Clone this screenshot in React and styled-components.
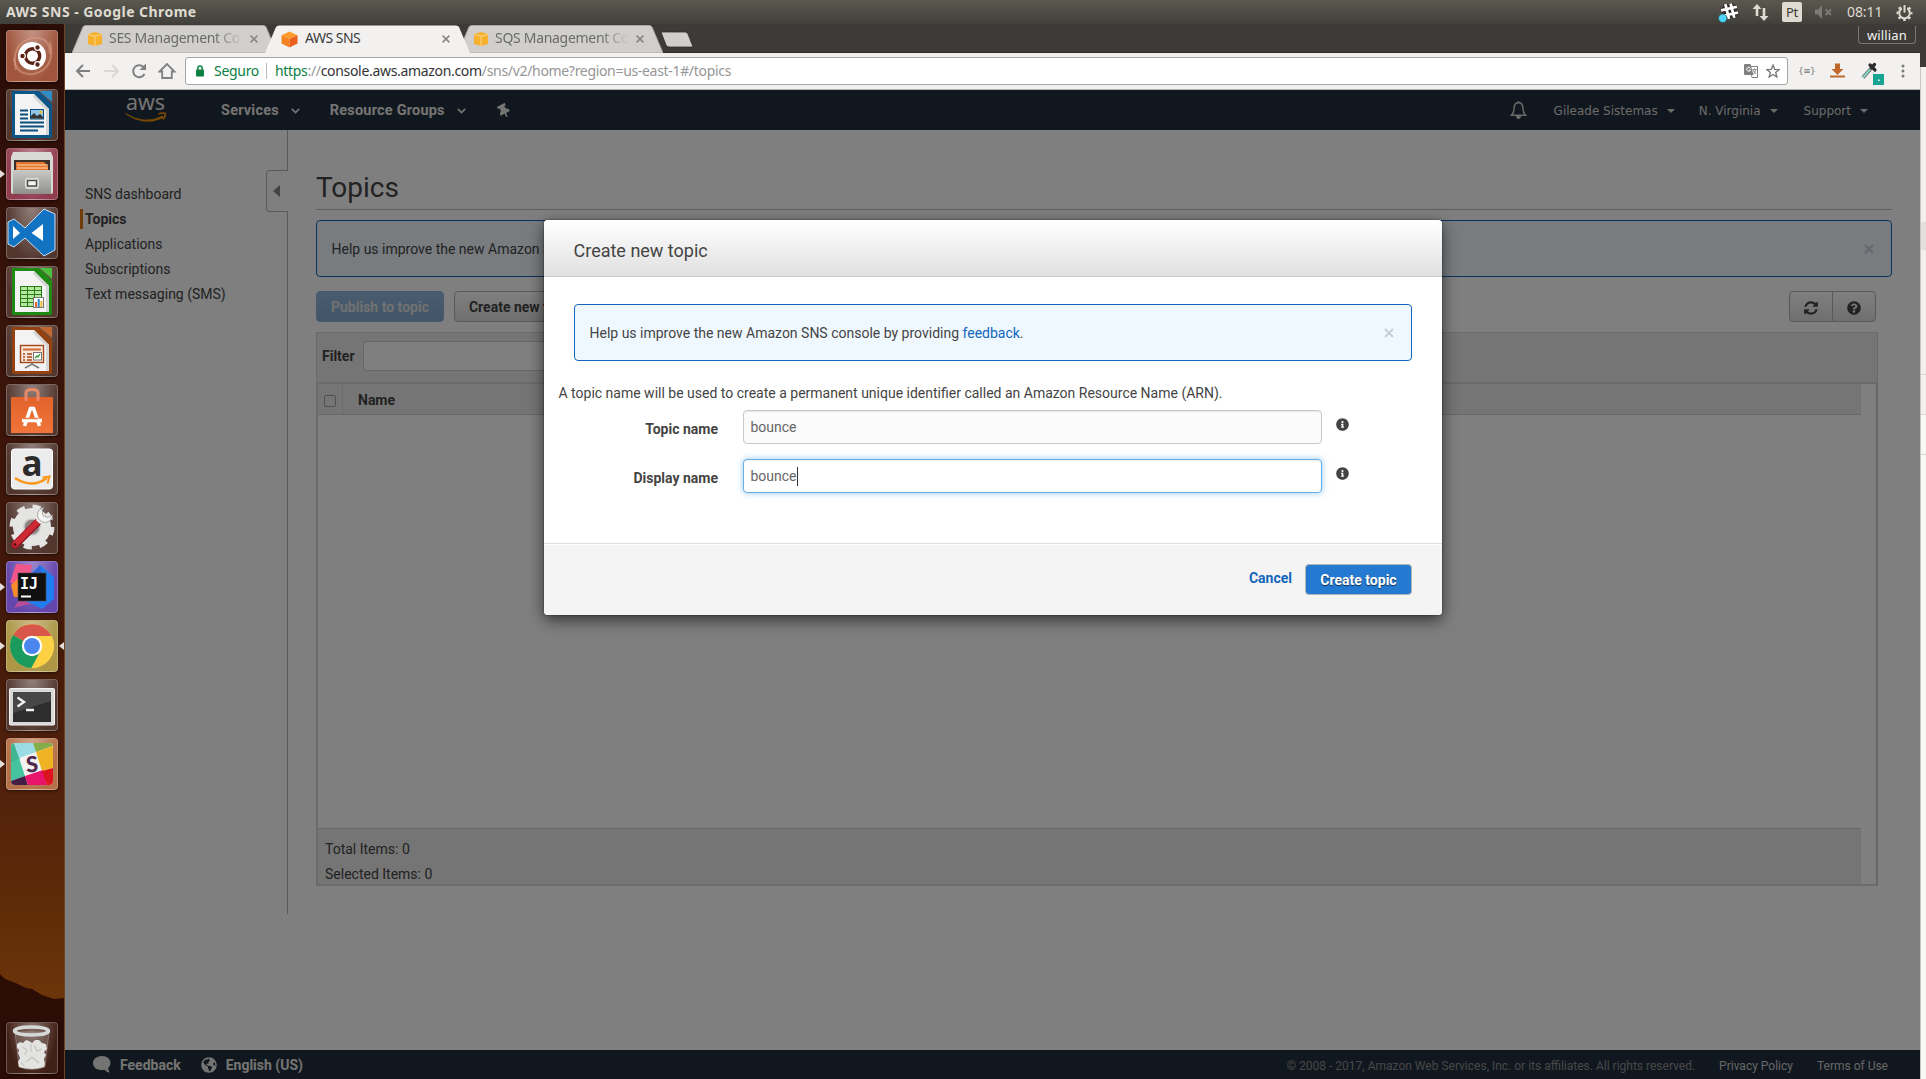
import React from "react";
import styled, { createGlobalStyle, css } from "styled-components";
import { FaInfoCircle, FaQuestionCircle, FaThumbtack, FaGlobeAmericas } from "react-icons/fa";

const ubuntu = `"Noto Sans", "Open Sans", sans-serif`;
const roboto = `Roboto, "Liberation Sans", sans-serif`;

const Global = createGlobalStyle`
  *, *::before, *::after { box-sizing: border-box; }
  html, body { margin: 0; padding: 0; }
  body { width: 1926px; height: 1079px; overflow: hidden; background: #000; font-family: ${roboto}; font-size: 14px; }
  svg { display: block; flex: none; }
`;

const Desktop = styled.div`
  width: 1926px;
  height: 1079px;
  display: grid;
  grid-template: 24px 1055px / 65px 1855px 6px;
  overflow: hidden;
`;

/* ---------- system panel ---------- */
const Panel = styled.header`
  grid-column: 1 / -1;
  display: flex;
  align-items: center;
  padding: 0 13px 0 6px;
  background: linear-gradient(#5b594f, #403f3a);
  color: #dfdbd2;
  font-family: ${ubuntu};
`;
const PanelTitle = styled.span`
  flex: 1;
  font-size: 14px;
  font-weight: 700;
  line-height: 24px;
  letter-spacing: ${(p) => p.$ls || "0px"};
  white-space: nowrap;
`;
const Indicators = styled.div`
  display: flex;
  align-items: center;
`;
const Indicator = styled.span`
  display: flex;
  margin-right: ${(p) => p.$gap}px;
`;
const LayoutBadge = styled.span`
  width: 20px;
  height: 20px;
  margin-right: 13px;
  border-radius: 2px;
  background: #dfdbd2;
  color: #3c3b37;
  font-size: 13px;
  line-height: 20px;
  text-align: center;
  letter-spacing: -0.2px;
`;
const Clock = styled.span`
  width: 36px;
  margin-right: 13px;
  font-size: 14px;
  line-height: 22px;
  letter-spacing: -0.1px;
  white-space: nowrap;
`;

/* ---------- launcher ---------- */
const Launcher = styled.nav`
  position: relative;
  display: flex;
  flex-direction: column;
  gap: 7px;
  padding: 6px 0 5px 6px;
  border-right: 1px solid #6d4326;
  background: linear-gradient(#2b0d07 0, #37130a 25%, #431909 55%, #51210c 72%, #5c2a08 82%, #6c3409 92%, #6c3409 100%);
`;
const Wallpaper = styled.svg`
  position: absolute;
  left: 0;
  bottom: 0;
`;
const Tile = styled.div`
  position: relative;
  width: 52px;
  height: 52px;
  flex: none;
  border-radius: 4px;
  border: 1px solid rgba(255, 255, 255, 0.24);
  background: radial-gradient(ellipse at 50% -10%, rgba(255, 255, 255, 0.42), rgba(255, 255, 255, 0.06) 75%), ${(p) => p.$bg || "#472a22"};
  box-shadow: 0 1px 3px rgba(0, 0, 0, 0.5);
  margin-top: ${(p) => (p.$last ? "auto" : 0)};
  & > svg { margin: -1px; }
`;
const Running = styled.i`
  position: absolute;
  left: -7px;
  top: 21px;
  border: 4px solid transparent;
  border-left: 5px solid #e3dedb;
  border-right: 0;
`;
const Focused = styled.i`
  position: absolute;
  right: -7px;
  top: 21px;
  border: 4px solid transparent;
  border-right: 5px solid #e3dedb;
  border-left: 0;
`;

/* ---------- browser ---------- */
const Browser = styled.main`
  display: grid;
  grid-template-rows: 29px 37px 960px 29px;
  min-width: 0;
  position: relative;
`;
const TabStrip = styled.div`
  display: flex;
  align-items: flex-end;
  padding-left: 7px;
  background: #3c3b37;
  border-bottom: 1px solid #2f2e2b;
`;
const Tab = styled.div`
  position: relative;
  display: flex;
  align-items: center;
  width: 205px;
  height: 28px;
  margin: 0 -12px -1px 0;
  padding-left: 16px;
  z-index: ${(p) => (p.$active ? 3 : 1)};
  color: ${(p) => (p.$active ? "#3c3c3c" : "#6b6b69")};
  font-family: ${ubuntu};
  font-size: 14px;
`;
const TabShape = styled.svg`
  position: absolute;
  inset: 0;
  z-index: -1;
`;
const TabTitle = styled.span`
  width: ${(p) => p.$w}px;
  margin-left: 7px;
  overflow: hidden;
  white-space: nowrap;
  line-height: 20px;
  padding-bottom: 2px;
  letter-spacing: ${(p) => p.$ls};
  ${(p) =>
    p.$fade &&
    css`
      mask-image: linear-gradient(90deg, #000 80%, transparent 101%);
    `}
`;
const TabClose = styled.svg`
  margin-left: ${(p) => p.$gap}px;
`;
const NewTab = styled.svg`
  margin: 0 0 4px 9px;
  align-self: flex-end;
`;
const UserBadge = styled.span`
  height: 18px;
  margin: 0 4px 8px auto;
  padding: 0 8px;
  border: 1px solid #7a7974;
  border-top: 0;
  border-radius: 0 0 4px 4px;
  color: #f2f1f0;
  font: 13px/19px ${ubuntu};
  letter-spacing: 0.15px;
`;
const Toolbar = styled.div`
  display: flex;
  align-items: center;
  padding-left: 9px;
  background: #f2f1f0;
  border-bottom: 1px solid #b6b4b2;
  font-family: ${ubuntu};
  font-size: 14px;
`;
const NavIcons = styled.div`
  display: flex;
  gap: 8px;
  width: 111px;
`;
const Omnibox = styled.div`
  display: flex;
  align-items: center;
  width: 1603px;
  height: 28px;
  padding: 0 7px 0 9px;
  border: 1px solid #a5a5a3;
  border-radius: 3px;
  background: #fff;
  white-space: nowrap;
  color: #969696;
  line-height: 24px;
`;
const Secure = styled.span`
  width: 53px;
  margin-left: 9px;
  padding-right: 7px;
  border-right: 1px solid #bbb;
  color: #0b8043;
  line-height: 16px;
  letter-spacing: ${(p) => p.$ls};
`;
const Url = styled.span`
  flex: 1;
  margin-left: 8px;
  letter-spacing: -0.32px;
  & em { font-style: normal; color: #0b8043; }
  & b { font-weight: 400; color: #333; }
`;
const BoxIcons = styled.div`
  display: flex;
  align-items: center;
  gap: 8px;
`;
const Extensions = styled.div`
  display: flex;
  align-items: center;
  flex: 1;
  padding-left: 10px;
`;
const ExtBraces = styled.span`
  width: 15px;
  color: #777;
  font: 9px/12px "DejaVu Sans", sans-serif;
  white-space: nowrap;
  letter-spacing: -0.6px;
`;

/* ---------- AWS page ---------- */
const Page = styled.section`
  display: grid;
  grid-template-rows: 40px 920px;
  background: #fff;
`;
const AwsHeader = styled.div`
  display: flex;
  align-items: center;
  padding: 0 52px 0 60px;
  background: #232f3e;
  color: #e8e8e6;
`;
const NavItem = styled.span`
  display: flex;
  align-items: center;
  gap: 12px;
  margin-left: ${(p) => p.$ml}px;
  padding-top: 2px;
  font-size: 14.5px;
  font-weight: 700;
  letter-spacing: 0.2px;
  line-height: 20px;
`;
const Pin = styled(FaThumbtack)`
  transform: rotate(-28deg);
`;
const Spacer = styled.span`
  flex: 1;
`;
const AccountItem = styled.span`
  display: flex;
  align-items: center;
  gap: 9px;
  margin-left: ${(p) => p.$ml}px;
  padding-top: 2px;
  color: #d6d6d4;
  font: 12px/20px "DejaVu Sans", Verdana, sans-serif;
`;
const Caret = styled.i`
  border: 4px solid transparent;
  border-top: 4px solid #d6d6d4;
  border-bottom: 0;
`;
const Columns = styled.div`
  display: grid;
  grid-template-columns: 223px 1fr;
`;
const Sidebar = styled.aside`
  position: relative;
  height: 784px;
  padding: 54px 0 0 15px;
  border-right: 1px solid #b4b4b4;
`;
const SideLink = styled.div`
  height: 20px;
  margin-bottom: 5px;
  padding-left: 2px;
  border-left: 3px solid ${(p) => (p.$active ? "#e47911" : "transparent")};
  font-weight: ${(p) => (p.$active ? 700 : 400)};
  color: #444;
  line-height: 20px;
`;
const Collapse = styled.div`
  position: absolute;
  right: -1px;
  top: 40px;
  display: flex;
  align-items: center;
  width: 22px;
  height: 42px;
  padding-left: 6px;
  border: 1px solid #b4b4b4;
  border-right: 0;
  border-radius: 4px 0 0 4px;
  background: #fff;
`;
const Content = styled.div`
  padding: 0 28px 0 28px;
`;
const Heading = styled.h1`
  height: 80px;
  margin: 0 0 10px;
  padding-top: 39px;
  border-bottom: 1px solid #bbb;
  color: #444;
  font-size: 28px;
  font-weight: 400;
  line-height: 38px;
`;
const Alert = styled.div`
  display: flex;
  align-items: center;
  justify-content: space-between;
  height: 57px;
  padding: 0 17px 0 14.5px;
  border: 1px solid #1166bb;
  border-radius: 4px;
  background: #f0f8ff;
  color: #444;
  line-height: 20px;
  & a { color: #1166bb; }
`;
const Actions = styled.div`
  display: flex;
  width: 1560px;
  height: 31px;
  margin: 14px 0 10px;
`;
const Button = styled.button`
  height: 31px;
  padding: 0 14px;
  border-radius: 4px;
  font: 700 14px/20px ${roboto};
  white-space: nowrap;
  ${(p) =>
    p.$primary
      ? css`
          color: #fff;
          border: 1px solid #b5b5b5;
          background: #2479d0;
          text-shadow: 0 1px 1px rgba(0, 0, 0, 0.6);
        `
      : css`
          color: #444;
          border: 1px solid #b2b2b2;
          background: linear-gradient(#fff, #dfdfdf);
        `}
  ${(p) =>
    p.$disabled &&
    css`
      color: #e2e2e2;
      border-color: #8fb3d8;
      background: linear-gradient(#92b9e0, #85aad0);
      text-shadow: none;
    `}
  & + & { margin-left: 10px; }
`;
const ButtonGroup = styled.div`
  display: flex;
  margin-left: auto;
  border: 1px solid #b2b2b2;
  border-radius: 4px;
  background: linear-gradient(#fff, #dfdfdf);
  color: #444;
`;
const GroupButton = styled.span`
  display: flex;
  align-items: center;
  justify-content: center;
  width: 42px;
  padding-top: 3px;
  & + & { width: 43px; border-left: 1px solid #b2b2b2; }
`;
const Table = styled.div`
  width: 1562px;
  height: 554px;
  display: grid;
  grid-template-rows: 50px 1fr;
`;
const FilterBar = styled.div`
  display: flex;
  align-items: flex-start;
  padding: 8px 6px 0 5px;
  border: 1px solid #d6d6d6;
  border-bottom: 0;
  background: #ebebeb;
  color: #444;
  font-weight: 700;
  line-height: 30px;
`;
const FilterInput = styled.div`
  width: 300px;
  height: 30px;
  margin-left: 8px;
  border: 1px solid #ccc;
  border-radius: 4px;
  background: #fff;
`;
const Grid = styled.div`
  display: grid;
  grid-template-rows: 31px 1fr 56px;
  padding-right: 15px;
  border: 2px solid #d6d6d6;
  border-right-color: #cfcfcf;
`;
const GridHead = styled.div`
  display: flex;
  align-items: flex-start;
  border-bottom: 1px solid #cfcfcf;
  background: #ebebeb;
  color: #444;
  font-weight: 700;
  line-height: 32px;
`;
const CheckCell = styled.span`
  width: 25px;
  height: 100%;
  padding: 11px 0 0 6px;
  margin-right: 15px;
  border-right: 1px solid #d6d6d6;
`;
const Checkbox = styled.i`
  display: block;
  width: 12px;
  height: 12px;
  border: 1px solid #a0a0a0;
  border-radius: 2px;
`;
const GridFoot = styled.div`
  padding: 8px 7px 0;
  border-top: 1px solid #cfcfcf;
  background: #ebebeb;
  color: #444;
  line-height: 25px;
`;
const Footer = styled.footer`
  display: flex;
  align-items: center;
  padding: 0 32px 0 28px;
  background: #232f3e;
  color: #e8e8e6;
`;
const FooterLink = styled.span`
  margin: 0 ${(p) => p.$mr || 0}px 0 9px;
  font-weight: 700;
`;
const Legal = styled.span`
  margin-left: ${(p) => p.$ml || 0}px;
  padding-top: 3px;
  font-size: 12px;
  color: ${(p) => (p.$dim ? "#8f9190" : "#cccccc")};
  white-space: nowrap;
`;

/* ---------- modal ---------- */
const Overlay = styled.div`
  position: absolute;
  left: 0;
  right: 0;
  top: 66px;
  bottom: 0;
  z-index: 10;
  display: flex;
  align-items: flex-start;
  justify-content: flex-start;
  padding: 130px 0 0 479px;
  background: rgba(0, 0, 0, 0.5);
`;
const Modal = styled.div`
  width: 898px;
  height: 395px;
  display: grid;
  grid-template-rows: 57px 266px 72px;
  border-radius: 4px;
  background: #fff;
  overflow: hidden;
  color: #444;
`;
const ModalShadow = styled.div`
  border-radius: 4px;
  box-shadow: 0 0 2px rgba(0, 0, 0, 0.6), 0 5px 16px rgba(0, 0, 0, 0.6);
`;
const ModalTitle = styled.div`
  padding-left: 29.5px;
  border-bottom: 1px solid #ccc;
  background: linear-gradient(#fff, #e0e0e0);
  font-size: 18px;
  line-height: 61px;
`;
const ModalBody = styled.div`
  padding: 27px 15px 0;
  & > ${Alert} { margin: 0 15px; }
`;
const Intro = styled.p`
  margin: 22px 0 7px -0.5px;
  line-height: 20px;
`;
const Field = styled.div`
  display: flex;
  align-items: flex-start;
  height: 34px;
  margin-bottom: 15px;
`;
const Label = styled.span`
  width: 159px;
  margin-right: 25px;
  padding-top: 2px;
  text-align: right;
  font-weight: 700;
  line-height: 34px;
`;
const Input = styled.div`
  display: flex;
  align-items: center;
  width: 579px;
  height: 34px;
  margin-right: 14px;
  padding-left: 6.5px;
  border: 1px solid #c8c8c8;
  border-radius: 4px;
  background: #fbfbfb;
  box-shadow: inset 0 1px 1px rgba(0, 0, 0, 0.08);
  color: #666;
  line-height: 20px;
  ${(p) =>
    p.$focus &&
    css`
      border-color: #66afe9;
      background: #fff;
      box-shadow: inset 0 1px 1px rgba(0, 0, 0, 0.06), 0 0 6px rgba(102, 175, 233, 0.7);
    `}
`;
const Cursor = styled.i`
  width: 1px;
  height: 19px;
  background: #333;
`;
const InfoIcon = styled(FaInfoCircle)`
  margin-top: 8px;
`;
const ModalFooter = styled.div`
  display: flex;
  align-items: flex-start;
  justify-content: flex-end;
  gap: 13px;
  padding: 19px 30px 0;
  border-top: 1px solid #ddd;
  box-shadow: inset 0 1px 0 #fff;
  background: #f4f4f4;
  & > ${Button} { width: 107px; margin-top: 1px; }
`;
const Cancel = styled.a`
  color: #1166bb;
  font-weight: 700;
  line-height: 30px;
`;

/* ---------- window behind ---------- */
const Behind = styled.div`
  display: grid;
  grid-template-rows: 43px 155px 28px 125px 40px 40px 1fr;
  border-left: 1px solid #c8c6c4;
  background: #f2f1f0;
`;
const Strip = styled.i`
  background: ${(p) => p.$bg};
  border-bottom: 1px solid ${(p) => p.$line || "transparent"};
  margin-left: ${(p) => p.$bleed || 0}px;
`;

const CloseX = () => (
  <svg width="10" height="10" viewBox="0 0 10 10">
    <path d="M1 1L9 9M9 1L1 9" stroke="#c4ced6" strokeWidth="1.900" />
  </svg>
);
const Chevron = () => (
  <svg width="9" height="6" viewBox="0 0 9 6">
    <path d="M.8 .8L4.500 4.600L8.200 .8" fill="none" stroke="#e8e8e6" strokeWidth="1.700" />
  </svg>
);
const Cube = ({ orange }) =>
  orange ? (
    <svg width="17" height="17" viewBox="0 0 17 17">
      <path d="M8.500 .5L16.500 4.200L8.500 8L.5 4.200Z" fill="#ff9a2e" />
      <path d="M.5 4.200L8.500 8V16.500L.5 12.500Z" fill="#f58220" />
      <path d="M16.500 4.200L8.500 8V16.500L16.500 12.500Z" fill="#ea5f1c" />
    </svg>
  ) : (
    <svg width="14" height="14" viewBox="0 0 14 14">
      <path d="M7 0L14 2V12L7 14L0 12V2Z" fill="#f6b22f" />
      <path d="M0 2.500L7 4.300L14 2.500M7 4.500V14" fill="none" stroke="#fbd893" strokeWidth=".9" />
    </svg>
  );

const BrowserTab = ({ title, active, w, ls, gap = 9 }) => (
  <Tab $active={active}>
    <TabShape width="205" height="28" viewBox="0 0 205 28">
      <path
        d="M0 28L11 2Q12 .5 14 .5H191Q193 .5 194 2L205 28Z"
        fill={active ? "#f2f1f0" : "#d0cfcd"}
        stroke={active ? "none" : "#a9a8a5"}
      />
    </TabShape>
    <Cube orange={active} />
    <TabTitle $w={w} $ls={ls} $fade={!active}>{title}</TabTitle>
    <TabClose $gap={gap} width="8" height="8" viewBox="0 0 8 8">
      <path d="M.6 .6L7.400 7.400M7.400 .6L.6 7.400" stroke="#858583" strokeWidth="1.500" />
    </TabClose>
  </Tab>
);

const FeedbackAlert = () => (
  <Alert>
    <span>Help us improve the new Amazon SNS console by providing <a>feedback</a>.</span>
    <CloseX />
  </Alert>
);

const DocIcon = ({ dark, light, children }) => (
  <svg width="52" height="52" viewBox="0 0 52 52">
    <path d="M6 2H33L46 15V47Q46 49 44 49H8Q6 49 6 47Z" fill={dark} />
    <path d="M34 2H46V13Z" fill={light} />
    <path d="M9 5H28L43 20V46H9Z" fill="#f3f3f3" />
    <path d="M28 5L43 20V46H40V21L27 8Z" fill="#d4d6d6" />
    {children}
  </svg>
);

const UbuntuIcon = () => (
  <svg width="52" height="52" viewBox="0 0 52 52">
    <path d="M10 40Q4 14 26 8Q44 6 44 24" fill="none" stroke="#d79a82" strokeWidth="2" opacity=".6" />
    <path d="M44 12Q50 38 28 44Q10 46 8 28" fill="none" stroke="#d79a82" strokeWidth="2" opacity=".6" />
    <circle cx="26" cy="26" r="14" fill="#fff" />
    <circle cx="26.500" cy="26" r="7.200" fill="none" stroke="#5b2416" strokeWidth="3.400" />
    <g fill="#5b2416" stroke="#fff" strokeWidth="1.200">
      <circle cx="16.500" cy="26" r="2.800" />
      <circle cx="31.500" cy="17.500" r="2.800" />
      <circle cx="31.500" cy="34.500" r="2.800" />
    </g>
  </svg>
);
const FilesIcon = () => (
  <svg width="52" height="52" viewBox="0 0 52 52">
    <defs>
      <linearGradient id="cab" x1="0" y1="0" x2="0" y2="1">
        <stop offset="0" stopColor="#c9c9c6" />
        <stop offset="1" stopColor="#8f8f8c" />
      </linearGradient>
    </defs>
    <path d="M7 4H45L47 9V44Q47 46 45 46H7Q5 46 5 44V9Z" fill="#d8d8d5" />
    <path d="M8 12H44V24H8Z" fill="#3a2f29" />
    <path d="M10 14H38L42 18V24H10Z" fill="#e2762f" />
    <path d="M11 17H42M11 20H42" stroke="#ffdca8" strokeWidth="1.200" />
    <path d="M7 22H45V46H7Z" fill="url(#cab)" />
    <rect x="19" y="30" width="14" height="11" rx="3" fill="#dededc" />
    <rect x="21.500" y="32.500" width="9" height="5.500" fill="#f4f4f4" stroke="#4b4b4b" strokeWidth="1.500" />
  </svg>
);
const CodeIcon = () => (
  <svg width="52" height="52" viewBox="0 0 52 52">
    <path d="M38 2L49 7V43L38 49L19 31L8 40L2 37V15L8 12L19 21Z" fill="#1173c2" stroke="#cfe0f0" strokeWidth="1" />
    <path d="M7 19V32L14 26Z" fill="#fff" />
    <path d="M37 17V34L25.500 26Z" fill="#fff" />
  </svg>
);
const BagIcon = () => (
  <svg width="52" height="52" viewBox="0 0 52 52">
    <defs>
      <linearGradient id="bag" x1="0" y1="0" x2="0" y2="1">
        <stop offset="0" stopColor="#e2622b" />
        <stop offset="1" stopColor="#f0753a" />
      </linearGradient>
    </defs>
    <path d="M5 13H47V49H5Z" fill="url(#bag)" />
    <path d="M20 17V9Q20 5.500 26 5.500Q32 5.500 32 9V17" fill="none" stroke="#e98a66" strokeWidth="3" />
    <path d="M18.500 42L24.500 24.500H27.500L33.500 42M16 36.500H36" fill="none" stroke="#fff" strokeWidth="3.600" />
    <path d="M17 34.500H32" stroke="#ef7a42" strokeWidth="1.500" />
  </svg>
);
const AmazonIcon = () => (
  <svg width="52" height="52" viewBox="0 0 52 52">
    <rect x="5.500" y="6" width="41" height="40" rx="3" fill="#ececec" stroke="#fff" />
    <text x="26" y="33" textAnchor="middle" fontFamily="Open Sans, sans-serif" fontWeight="700" fontSize="35" fill="#2b2b2b">a</text>
    <path d="M9 35Q26 46 41 35" fill="none" stroke="#f7981d" strokeWidth="2.600" />
    <path d="M36.500 34.500L43.500 33.500L41.500 40.500" fill="none" stroke="#f7981d" strokeWidth="2" />
  </svg>
);
const SettingsIcon = () => (
  <svg width="52" height="52" viewBox="0 0 52 52">
    <circle cx="26" cy="25" r="20" fill="none" stroke="#e4e4e2" strokeWidth="5" strokeDasharray="8 7.700" />
    <circle cx="26" cy="25" r="13.500" fill="none" stroke="#e4e4e2" strokeWidth="11" />
    <circle cx="26" cy="25" r="8" fill="#8d8280" stroke="#c6c6c4" strokeWidth="1.500" />
    <path d="M9 43L31 21" stroke="#8d1720" strokeWidth="7.600" strokeLinecap="round" />
    <path d="M9 42.500L31 20.500" stroke="#cf2a33" strokeWidth="5.600" strokeLinecap="round" />
    <path d="M32 20L37 15" stroke="#ededed" strokeWidth="6" />
    <path d="M38 5.500A7.500 7.500 0 1 0 46.500 13L42 15.500L37 13.500L36 8.500Z" fill="#f3f3f3" stroke="#8e8e8e" strokeWidth=".7" />
    <circle cx="9" cy="42.500" r="1.500" fill="#5b0c12" />
  </svg>
);
const IdeaIcon = () => (
  <svg width="52" height="52" viewBox="0 0 52 52">
    <path d="M10 3L26 4L22 24L4 22Z" fill="#f0568a" />
    <path d="M5 24L18 12V36H8Z" fill="#f68b2c" />
    <path d="M8 47L20 28L34 40Z" fill="#b74c9a" />
    <path d="M34 4L48 16V38L36 48L20 40L26 12Z" fill="#1f7df0" />
    <path d="M26 14L34 4L38 22Z" fill="#3563d8" />
    <rect x="12" y="12" width="28" height="28" fill="#101010" stroke="#4b4b4b" strokeWidth=".6" />
    <text x="14" y="28" fontFamily="DejaVu Sans Mono, monospace" fontWeight="700" fontSize="15" fill="#fff">IJ</text>
    <path d="M15 35.500H25" stroke="#fff" strokeWidth="2" />
  </svg>
);
const ChromeIcon = () => (
  <svg width="52" height="52" viewBox="0 0 52 52">
    <circle cx="26" cy="26" r="22" fill="#fdd144" />
    <path d="M26 26L7 15A22 22 0 0 1 45.500 16H26Z" fill="#d8564a" />
    <path d="M7 15A22 22 0 0 0 25.500 48L35 31L26 26Z" fill="#1a9a5c" />
    <path d="M26 16H45.500A22 22 0 0 1 25.500 48L35 30Z" fill="#fdd144" />
    <circle cx="26" cy="26" r="10.200" fill="#fff" />
    <circle cx="26" cy="26" r="8" fill="#4a86ee" />
  </svg>
);
const TerminalIcon = () => (
  <svg width="52" height="52" viewBox="0 0 52 52">
    <rect x="3.500" y="9.500" width="45" height="36.500" rx="1" fill="#d9d9d7" stroke="#f3f3f3" />
    <rect x="7" y="13" width="38" height="30" fill="#2d2d2d" />
    <path d="M7 13H45V22L7 34Z" fill="#474747" />
    <path d="M11.500 18.500L18 23L11.500 27.500M20 31H28" fill="none" stroke="#f2f2f2" strokeWidth="2.400" />
  </svg>
);
const SlackIcon = () => (
  <svg width="52" height="52" viewBox="0 0 52 52">
    <defs><clipPath id="sl"><rect x="5" y="5" width="42" height="42" rx="4" /></clipPath></defs>
    <g clipPath="url(#sl)">
      <rect x="5" y="5" width="42" height="42" fill="#f4f2f0" />
      <path d="M5 5H8L14 21L5 25Z" fill="#3fb590" />
      <path d="M8 5H27L30 14L13 20Z" fill="#9adbe4" />
      <path d="M27 5H47V8L30 14Z" fill="#84ae4a" />
      <path d="M30 14L47 8V30L36 33Z" fill="#efb323" />
      <path d="M5 25L13 20L19 38L5 43Z" fill="#45c3a0" />
      <path d="M5 43L19 38L22 47H5Z" fill="#441f45" />
      <path d="M19 38L37 32L41 47H22Z" fill="#e8146c" />
      <path d="M36 33L47 30V47H41Z" fill="#dc1420" />
    </g>
    <text x="26" y="34" textAnchor="middle" fontFamily="Lato, sans-serif" fontWeight="900" fontSize="22" fill="#50294f" transform="rotate(-4 26 26)">S</text>
  </svg>
);
const TrashIcon = () => (
  <svg width="52" height="52" viewBox="0 0 52 52">
    <path d="M9 10L13 45Q26 50 39 45L43 10Z" fill="rgba(255,255,255,.12)" stroke="rgba(255,255,255,.25)" />
    <path d="M11 22L14 20L17 21L20 18L23 19L26 21L29 18L33 18L36 21L40 22L41 27L38 30L40 33L38 37L39 42L38 45Q26 49 13 45L12 40L14 36L12 31L13 28L11 26Z" fill="#e3e3e1" />
    <path d="M16 25L21 28L19 33M28 23L31 29L36 27M20 40L26 35L33 41M15 40L18 44M25 22L25 30" fill="none" stroke="#c4c4c1" strokeWidth="1.200" />
    <ellipse cx="25.500" cy="9" rx="17" ry="4" fill="none" stroke="#d5dad8" strokeWidth="3.400" />
  </svg>
);

const apps = [
  { id: "dash", bg: "#9a4a30", icon: <UbuntuIcon /> },
  {
    id: "writer",
    icon: (
      <DocIcon dark="#0b5688" light="#2e8cc7">
        <path d="M14 21.500H22M14 25.500H22M14 29.500H22M14 33.500H38M14 37.500H38M14 41.500H32" stroke="#0d4e80" strokeWidth="2" />
        <rect x="24.500" y="20.500" width="13" height="9.500" fill="#8ec4e8" stroke="#0d4e80" />
        <path d="M25 29.500V27L28 24L31 27L34 25L37 28V29.500Z" fill="#333" />
        <circle cx="35" cy="23" r="1.600" fill="#eec330" />
      </DocIcon>
    ),
  },
  { id: "files", bg: "#8a3145", running: true, icon: <FilesIcon /> },
  { id: "code", icon: <CodeIcon /> },
  {
    id: "calc",
    icon: (
      <DocIcon dark="#1d8a12" light="#4cc03c">
        <rect x="14.500" y="20.500" width="21" height="20" fill="#b5e6a4" stroke="#26800f" />
        <path d="M14 24.500H36M14 28.500H36M14 32.500H36M14 36.500H36M21.500 20V41M28.500 20V41" stroke="#26800f" />
        <rect x="27.500" y="31.500" width="10" height="10" fill="#fff" stroke="#777" />
        <path d="M30 41V36" stroke="#e8682a" strokeWidth="2" />
        <path d="M32.700 41V33" stroke="#2a7fc0" strokeWidth="2" />
        <path d="M35.400 41V35" stroke="#edb72e" strokeWidth="2" />
      </DocIcon>
    ),
  },
  {
    id: "impress",
    icon: (
      <DocIcon dark="#93420f" light="#c4672f">
        <rect x="14.500" y="20.500" width="23" height="17" fill="#fbe9dc" stroke="#a4461a" strokeWidth="1.400" />
        <path d="M17 24.500H35" stroke="#cf6a35" strokeWidth="2" />
        <path d="M17 29H19M17 32H19M17 35H19M21 29H26M21 32H26M21 35H26" stroke="#a4461a" strokeWidth="1.600" />
        <rect x="27.500" y="27.500" width="8" height="7.500" fill="#fff" stroke="#777" />
        <path d="M29 33L31 31L32 32L34 29" fill="none" stroke="#2f9a31" strokeWidth="1.300" />
        <path d="M26 38V40M19 43L26 39L33 43" fill="none" stroke="#777" strokeWidth="1.500" />
      </DocIcon>
    ),
  },
  { id: "software", icon: <BagIcon /> },
  { id: "amazon", icon: <AmazonIcon /> },
  { id: "settings", icon: <SettingsIcon /> },
  { id: "idea", bg: "#5a3aa8", running: true, icon: <IdeaIcon /> },
  { id: "chrome", bg: "#a8903c", running: true, focused: true, icon: <ChromeIcon /> },
  { id: "terminal", icon: <TerminalIcon /> },
  { id: "slack", bg: "#b0683e", running: true, icon: <SlackIcon /> },
];

const sideLinks = ["SNS dashboard", "Topics", "Applications", "Subscriptions", "Text messaging (SMS)"];

export default function App() {
  return (
    <Desktop>
      <Global />
      <Panel>
        <PanelTitle $ls="0.46px">AWS SNS - Google Chrome</PanelTitle>
        <Indicators>
          <Indicator $gap={13}>
            <svg width="21" height="21" viewBox="0 0 20 20">
              <path d="M7 2L10.500 16M12 1.500L15.500 15M3 8L18 4.500M4 13.500L19 10" stroke="#111" strokeWidth="5" opacity=".55" />
              <path d="M7 2L10.500 16M12 1.500L15.500 15M3 8L18 4.500M4 13.500L19 10" stroke="#fff" strokeWidth="2.600" />
              <circle cx="4.500" cy="15.500" r="4" fill="#4fd6fa" stroke="#2e5a66" strokeWidth=".8" />
            </svg>
          </Indicator>
          <Indicator $gap={13}>
            <svg width="17" height="17" viewBox="0 0 17 17">
              <path d="M5 0L9.500 5H6.300V12H3.700V5H.5ZM12 17L7.500 12H10.700V4H13.300V12H16.500Z" fill="#dfdbd2" />
            </svg>
          </Indicator>
          <LayoutBadge>Pt</LayoutBadge>
          <Indicator $gap={15}>
            <svg width="17" height="14" viewBox="0 0 17 14">
              <path d="M0 4.500H3L7 0V14L3 9.500H0Z" fill="#7c7a72" />
              <path d="M10.500 4.500L16 10M16 4.500L10.500 10" stroke="#7c7a72" strokeWidth="1.800" />
            </svg>
          </Indicator>
          <Clock>08:11</Clock>
          <svg width="17" height="17" viewBox="0 0 17 17">
            <circle cx="8.500" cy="9" r="7" fill="none" stroke="#dfdbd2" strokeWidth="2" strokeDasharray="2.600 2.898" strokeDashoffset="1.300" />
            <circle cx="8.500" cy="9" r="5.300" fill="none" stroke="#dfdbd2" strokeWidth="2" />
            <path d="M8.500 0V6" stroke="#4c4b45" strokeWidth="5" />
            <path d="M8.500 1V8.500" stroke="#dfdbd2" strokeWidth="2" />
          </svg>
        </Indicators>
      </Panel>

      <Launcher>
        <Wallpaper width="64" height="105" viewBox="0 0 64 105">
          <path d="M0 0L5 5L18 10L26 14L32 15L42 21L54 25L64 24V105H0Z" fill="#2c0d06" />
        </Wallpaper>
        {apps.map((a) => (
          <Tile key={a.id} $bg={a.bg}>
            {a.icon}
            {a.running && <Running />}
            {a.focused && <Focused />}
          </Tile>
        ))}
        <Tile $last $bg="#351208">
          <TrashIcon />
        </Tile>
      </Launcher>

      <Browser>
        <TabStrip>
          <BrowserTab title="SES Management Console" w={132} ls="-0.3px" />
          <BrowserTab active title="AWS SNS" w={130} ls="-0.5px" gap={7} />
          <BrowserTab title="SQS Management Console" w={132} ls="-0.3px" />
          <NewTab width="34" height="17" viewBox="0 0 34 17">
            <path d="M1 1H25Q27 1 28 3L33 16H9Q7 16 6 14Z" fill="#d0cfcd" stroke="#2f2e2b" strokeWidth=".8" />
          </NewTab>
          <UserBadge>willian</UserBadge>
        </TabStrip>

        <Toolbar>
          <NavIcons>
            <svg width="20" height="18" viewBox="0 0 20 18">
              <path d="M16 9H3M9 3L3 9L9 15" fill="none" stroke="#808080" strokeWidth="2" />
            </svg>
            <svg width="20" height="18" viewBox="0 0 20 18">
              <path d="M2 9H16M10 3L16 9L10 15" fill="none" stroke="#d8d7d5" strokeWidth="2" />
            </svg>
            <svg width="20" height="18" viewBox="0 0 20 18">
              <path d="M14.500 12A6 6 0 1 1 14 5.500" fill="none" stroke="#808080" strokeWidth="2" />
              <path d="M16 1.500V8H9.500Z" fill="#808080" />
            </svg>
            <svg width="20" height="18" viewBox="0 0 20 18">
              <path d="M9 2L1.500 9.500H4.200V16H13.800V9.500H16.500Z" fill="none" stroke="#808080" strokeWidth="1.800" />
            </svg>
          </NavIcons>
          <Omnibox>
            <svg width="10" height="12" viewBox="0 0 10 12">
              <path d="M2.800 5V3.200A2.200 2.200 0 0 1 7.200 3.200V5" fill="none" stroke="#0b8043" strokeWidth="1.500" />
              <rect x="1" y="4.500" width="8" height="7" rx=".8" fill="#0b8043" />
            </svg>
            <Secure $ls="-0.3px">Seguro</Secure>
            <Url>
              <em>https</em>://<b>console.aws.amazon.com</b>/sns/v2/home?region=us-east-1#/topics
            </Url>
            <BoxIcons>
              <svg width="14" height="14" viewBox="0 0 14 14">
                <path d="M1 0H6.500L9.500 11H1Q0 11 0 10V1Q0 0 1 0Z" fill="#808080" />
                <path d="M6.500 2.500H13.500V13.500H8L7.500 11" fill="none" stroke="#808080" />
                <path d="M6.500 4.300A2 2 0 1 0 6.600 6H4.800" fill="none" stroke="#fff" />
                <path d="M8.500 5.500H12.500M10.500 4.500V5.500M9 6L12 10M12 6L9.500 10" stroke="#808080" strokeWidth=".9" />
              </svg>
              <svg width="14" height="14" viewBox="0 0 14 14">
                <path d="M7 1L8.700 5.300L13.200 5.600L9.700 8.500L10.900 13L7 10.500L3.100 13L4.300 8.500L.8 5.600L5.300 5.300Z" fill="none" stroke="#767676" strokeWidth="1.300" />
              </svg>
            </BoxIcons>
          </Omnibox>
          <Extensions>
            <ExtBraces>{"{≡}"}</ExtBraces>
            <svg width="73" height="28" viewBox="0 0 73 28">
              <path d="M22 6.500H27V12H30.500L24.500 18L18.500 12H22Z" fill="#c0692a" />
              <path d="M17 19.500H32" stroke="#c0692a" strokeWidth="2" />
              <path d="M50 20.500L58 11.500" stroke="#777" strokeWidth="3.600" />
              <path d="M50 20.500L57 12.500" stroke="#7fe6cf" strokeWidth="1.800" />
              <path d="M57 8L62 13M58.500 10.500L61.500 7.500" stroke="#2b2b2b" strokeWidth="3.200" strokeLinecap="round" />
              <rect x="60" y="17" width="11" height="11" fill="#17a493" />
              <rect x="65" y="22.500" width="1.500" height="1.500" fill="#fff" />
            </svg>
            <svg width="20" height="16" viewBox="0 0 20 16">
              <circle cx="17" cy="3" r="1.500" fill="#7a7a7a" />
              <circle cx="17" cy="8" r="1.500" fill="#7a7a7a" />
              <circle cx="17" cy="13" r="1.500" fill="#7a7a7a" />
            </svg>
          </Extensions>
        </Toolbar>

        <Page>
          <AwsHeader>
            <svg width="42" height="30" viewBox="0 0 42 30">
              <text x="20.500" y="15" textAnchor="middle" fontFamily="Noto Sans, sans-serif" fontSize="21" fill="#e8e8e6" textLength="39" lengthAdjust="spacingAndGlyphs">aws</text>
              <path d="M.5 18.500Q19 30.500 38 21L37.500 23Q18 31.500 .5 18.500Z" fill="#f90" stroke="#f90" strokeWidth=".8" />
              <path d="M33.500 19Q38 17.300 40.500 18.500Q40.500 21.500 38 24.500" fill="none" stroke="#f90" strokeWidth="1.500" />
            </svg>
            <NavItem $ml={54}>Services <Chevron /></NavItem>
            <NavItem $ml={30}>Resource Groups <Chevron /></NavItem>
            <NavItem $ml={31}><Pin size={14} /></NavItem>
            <Spacer />
            <svg width="17" height="18" viewBox="0 0 17 18">
              <path d="M8.500 1.500C5 1.800 4 4.500 4 8Q4 11.500 1.500 14.200H15.500Q13 11.500 13 8C13 4.500 12 1.800 8.500 1.500Z" fill="none" stroke="#d6d6d4" strokeWidth="1.400" />
              <path d="M6.500 15.500A2 2 0 0 0 10.500 15.500Z" fill="#d6d6d4" stroke="#d6d6d4" />
              <circle cx="8.500" cy="1.200" r="1" fill="#d6d6d4" />
            </svg>
            <AccountItem $ml={27}>Gileade Sistemas <Caret /></AccountItem>
            <AccountItem $ml={24}>N. Virginia <Caret /></AccountItem>
            <AccountItem $ml={26}>Support <Caret /></AccountItem>
          </AwsHeader>
          <Columns>
            <Sidebar>
              {sideLinks.map((t, i) => (
                <SideLink key={t} $active={i === 1}>{t}</SideLink>
              ))}
              <Collapse>
                <svg width="7" height="12" viewBox="0 0 7 12">
                  <path d="M7 0V12L0 6Z" fill="#888" />
                </svg>
              </Collapse>
            </Sidebar>
            <Content>
              <Heading>Topics</Heading>
              <FeedbackAlert />
              <Actions>
                <Button $primary $disabled>Publish to topic</Button>
                <Button>Create new topic</Button>
                <ButtonGroup>
                  <GroupButton>
                    <svg width="16" height="16" viewBox="0 0 1792 1792">
                      <path fill="#444" d="M1639 1056q0 5-1 7-64 268-268 434.500t-478 166.500q-146 0-282.500-55t-243.500-157l-129 129q-19 19-45 19t-45-19-19-45v-448q0-26 19-45t45-19h448q26 0 45 19t19 45-19 45l-137 137q71 66 161 102t187 36q134 0 250-65t186-179q11-17 53-117 8-23 30-23h192q13 0 22.500 9.500t9.500 22.500zm25-800v448q0 26-19 45t-45 19h-448q-26 0-45-19t-19-45 19-45l138-138q-148-137-349-137-134 0-250 65t-186 179q-11 17-53 117-8 23-30 23h-199q-13 0-22.500-9.500t-9.500-22.500v-7q65-268 270-434.500t480-166.500q146 0 284 55.500t245 156.500l130-129q19-19 45-19t45 19 19 45z" />
                    </svg>
                  </GroupButton>
                  <GroupButton><FaQuestionCircle size={14} /></GroupButton>
                </ButtonGroup>
              </Actions>
              <Table>
                <FilterBar>Filter<FilterInput /></FilterBar>
                <Grid>
                  <GridHead>
                    <CheckCell><Checkbox /></CheckCell>
                    Name
                  </GridHead>
                  <div />
                  <GridFoot>
                    <div>Total Items: 0</div>
                    <div>Selected Items: 0</div>
                  </GridFoot>
                </Grid>
              </Table>
            </Content>
          </Columns>
        </Page>

        <Footer>
          <svg width="18" height="17" viewBox="0 0 18 17">
            <path d="M9 0C14 0 17.500 3 17.500 7Q17.500 10 15 12Q15.500 15 17 16.500Q13.500 16.500 11.500 13.800C5 15 0 12 0 7C0 3 4 0 9 0Z" fill="#e8e8e6" />
          </svg>
          <FooterLink $mr={20}>Feedback</FooterLink>
          <FaGlobeAmericas size={16} />
          <FooterLink>English (US)</FooterLink>
          <Spacer />
          <Legal $dim>© 2008 - 2017, Amazon Web Services, Inc. or its affiliates. All rights reserved.</Legal>
          <Legal $ml={24}>Privacy Policy</Legal>
          <Legal $ml={24}>Terms of Use</Legal>
        </Footer>

        <Overlay>
          <ModalShadow>
            <Modal>
              <ModalTitle>Create new topic</ModalTitle>
              <ModalBody>
                <FeedbackAlert />
                <Intro>A topic name will be used to create a permanent unique identifier called an Amazon Resource Name (ARN).</Intro>
                <Field>
                  <Label>Topic name</Label>
                  <Input>bounce</Input>
                  <InfoIcon size={13} />
                </Field>
                <Field>
                  <Label>Display name</Label>
                  <Input $focus>bounce<Cursor /></Input>
                  <InfoIcon size={13} />
                </Field>
              </ModalBody>
              <ModalFooter>
                <Cancel>Cancel</Cancel>
                <Button $primary>Create topic</Button>
              </ModalFooter>
            </Modal>
          </ModalShadow>
        </Overlay>
      </Browser>

      <Behind>
        <Strip $bg="#3c3b37" $bleed={-1} />
        <Strip $bg="#f2f1f0" />
        <Strip $bg="#e2e0de" />
        <Strip $bg="#f2f1f0" $line="#d8d6d4" />
        <Strip $bg="#f2f1f0" $line="#d8d6d4" />
        <Strip $bg="#f8f8f7" $line="#d8d6d4" />
        <Strip $bg="#f8f8f7" />
      </Behind>
    </Desktop>
  );
}
